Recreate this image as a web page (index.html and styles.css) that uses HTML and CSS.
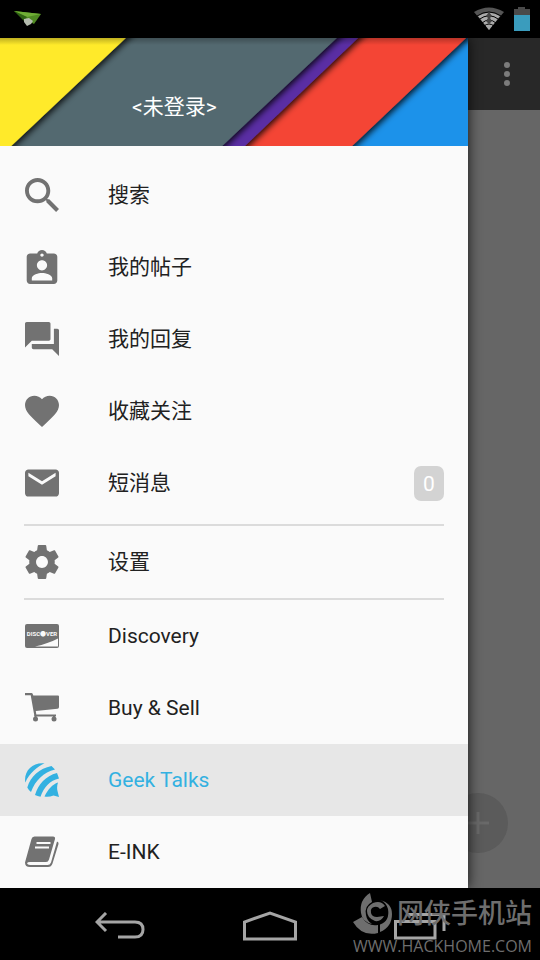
FILE: index.html
```html
<!DOCTYPE html>
<html lang="zh-CN">
<head>
<meta charset="utf-8">
<meta name="viewport" content="width=device-width, initial-scale=1">
<title>Geek Talks</title>
<link rel="stylesheet" href="styles.css">
</head>
<body>
<header class="status">
  <svg class="status-plane" width="28" height="16" viewBox="0 0 28 16" aria-hidden="true">
    <path d="M0 0L27 3L20 13L13 9Z" fill="#4f8a22"/>
    <path d="M0 0L27 3L13 6Z" fill="#6fae35"/>
    <path d="M0 0L13 6L10 10Z" fill="#2f6213"/>
    <path d="M10 8l5-1 4 3-2 3-4 2-3-4z" fill="#b4bcae"/>
  </svg>
  <div class="status-icons">
    <svg width="30" height="24" viewBox="0 0 30 24" aria-hidden="true">
      <path d="M0 5Q15-4 30 5L15 23Z" fill="#555"/>
      <path d="M4 9Q15 2 26 9L15 23Z" fill="#aaa"/>
      <g fill="none" stroke="#000" stroke-width="1"><path d="M3 9Q15 1 27 9"/><path d="M5 12.500Q15 5 25 12.500"/><path d="M8 16Q15 10 22 16"/><path d="M10 19Q15 15 20 19"/></g>
      <path d="M15 5l3 4-2 2 2 3-3 3-3-3 2-3-2-2z" fill="#444"/>
    </svg>
    <svg width="16" height="24" viewBox="0 0 16 24" aria-hidden="true">
      <path d="M4 0h7v2h5v7H0V2h4z" fill="#4a4a4a"/>
      <path d="M0 8h16v16H0z" fill="#3a9cbd"/>
    </svg>
  </div>
</header>

<main class="screen">
  <div class="toolbar">
    <button class="more" type="button" aria-label="更多">
      <svg width="6" height="24" viewBox="0 0 6 24"><circle cx="3" cy="3" r="3"/><circle cx="3" cy="12" r="3"/><circle cx="3" cy="21" r="3"/></svg>
    </button>
  </div>
  <button class="fab" type="button" aria-label="发帖">
    <svg width="22" height="22" viewBox="0 0 22 22"><path d="M11 0v22M0 11h22"/></svg>
  </button>

  <aside class="drawer">
    <div class="account">
      <svg class="account-art" viewBox="0 0 468 108" preserveAspectRatio="none" aria-hidden="true">
        <defs>
          <filter id="edge" x="-10%" y="-20%" width="120%" height="140%"><feDropShadow dx="2" dy="2" stdDeviation="3" flood-color="#000" flood-opacity=".85"/></filter>
          <linearGradient id="top" x1="0" y1="0" x2="0" y2="1"><stop offset="0" stop-opacity=".25"/><stop offset="1" stop-opacity="0"/></linearGradient>
        </defs>
        <path d="M0 0h468v108H0z" fill="#1c92ea"/>
        <path d="M-20-20H487L331 128H-20z" fill="#f44434" filter="url(#edge)"/>
        <path d="M-20-20H379L224 128H-20z" fill="#5a2ea4" filter="url(#edge)"/>
        <path d="M-20-20H358L201 128H-20z" fill="#52696f" filter="url(#edge)"/>
        <path d="M-20-20H147L-10 128H-20z" fill="#ffea2a" filter="url(#edge)"/>
        <path d="M0 0h468v7H0z" fill="url(#top)"/>
      </svg>
      <a class="account-name" href="#login">&lt;未登录&gt;</a>
    </div>
    <nav class="menu">
      <a class="item" href="#search">
        <svg class="icon" viewBox="3 3 17.5 17.5"><path d="M15.5 14h-.79l-.28-.27C15.41 12.59 16 11.11 16 9.5 16 5.91 13.09 3 9.5 3S3 5.91 3 9.5 5.91 16 9.5 16c1.61 0 3.09-.59 4.23-1.57l.27.28v.79l5 4.99L20.49 19l-4.99-5zm-6 0C7.01 14 5 11.99 5 9.5S7.01 5 9.5 5 14 7.01 14 9.5 11.99 14 9.5 14z"/></svg>
        <span class="label">搜索</span>
      </a>
      <a class="item" href="#posts">
        <svg class="icon" viewBox="2 1 20 20"><path d="M19 3h-4.18C14.4 1.84 13.3 1 12 1c-1.3 0-2.4.84-2.82 2H5c-1.1 0-2 .9-2 2v14c0 1.1.9 2 2 2h14c1.1 0 2-.9 2-2V5c0-1.1-.9-2-2-2zm-7 0c.55 0 1 .45 1 1s-.45 1-1 1-1-.45-1-1 .45-1 1-1zm0 4c1.66 0 3 1.34 3 3s-1.34 3-3 3-3-1.34-3-3 1.34-3 3-3zm6 12H6v-1.4c0-2 4-3.1 6-3.1s6 1.1 6 3.1V19z"/></svg>
        <span class="label">我的帖子</span>
      </a>
      <a class="item" href="#replies">
        <svg class="icon" viewBox="2 2 20 20"><path d="M21 6h-2v9H6v2c0 .55.45 1 1 1h11l4 4V7c0-.55-.45-1-1-1zm-4 6V3c0-.55-.45-1-1-1H3c-.55 0-1 .45-1 1v14l4-4h10c.55 0 1-.45 1-1z"/></svg>
        <span class="label">我的回复</span>
      </a>
      <a class="item" href="#favorites">
        <svg class="icon" viewBox="2 2 20 20"><path d="M12 21.35l-1.45-1.32C5.4 15.36 2 12.28 2 8.5 2 5.42 4.42 3 7.5 3c1.74 0 3.41.81 4.5 2.09C13.09 3.81 14.76 3 16.5 3 19.58 3 22 5.42 22 8.5c0 3.78-3.4 6.86-8.55 11.54L12 21.35z"/></svg>
        <span class="label">收藏关注</span>
      </a>
      <a class="item" href="#messages">
        <svg class="icon" viewBox="2 2 20 20"><path d="M20 4H4c-1.1 0-1.99.9-1.99 2L2 18c0 1.1.9 2 2 2h16c1.1 0 2-.9 2-2V6c0-1.1-.9-2-2-2zm0 4l-8 5-8-5V6l8 5 8-5v2z"/></svg>
        <span class="label">短消息</span>
        <span class="count">0</span>
      </a>
      <hr class="rule rule-spaced">
      <a class="item" href="#settings">
        <svg class="icon" viewBox="2 2 20 20"><path d="M19.43 12.98c.04-.32.07-.64.07-.98s-.03-.66-.07-.98l2.11-1.65c.19-.15.24-.42.12-.64l-2-3.46c-.12-.22-.39-.3-.61-.22l-2.49 1c-.52-.4-1.08-.73-1.69-.98l-.38-2.65C14.46 2.18 14.25 2 14 2h-4c-.25 0-.46.18-.49.42l-.38 2.65c-.61.25-1.17.59-1.69.98l-2.49-1c-.23-.09-.49 0-.61.22l-2 3.46c-.13.22-.07.49.12.64l2.11 1.65c-.04.32-.07.65-.07.98s.03.66.07.98l-2.11 1.65c-.19.15-.24.42-.12.64l2 3.46c.12.22.39.3.61.22l2.49-1c.52.4 1.08.73 1.69.98l.38 2.65c.03.24.24.42.49.42h4c.25 0 .46-.18.49-.42l.38-2.65c.61-.25 1.17-.59 1.69-.98l2.49 1c.23.09.49 0 .61-.22l2-3.46c.12-.22.07-.49-.12-.64l-2.11-1.65zM12 15.5c-1.93 0-3.5-1.57-3.5-3.5s1.57-3.5 3.5-3.5 3.5 1.57 3.5 3.5-1.57 3.5-3.5 3.5z"/></svg>
        <span class="label">设置</span>
      </a>
      <hr class="rule">
      <a class="item" href="#discovery">
        <svg class="icon" viewBox="0 0 34 34">
          <rect y="5" width="34" height="24" rx="2"/>
          <path d="M33 19.500v8H10C19 25.500 26 23 33 19.500z" fill="#fafafa"/>
          <text class="card-text" x="17" y="17" text-anchor="middle">DISC●VER</text>
        </svg>
        <span class="label">Discovery</span>
      </a>
      <a class="item" href="#buy-sell">
        <svg class="icon" viewBox="0 0 34 34">
          <path d="M0 2h6.500q1 0 1.200 1L8.300 4.500H33q1 0 1 1V16q0 1.500-1.500 1.800L10.800 20l.5 3.500H31V25.500H10.500q-1.200 0-1.200-1L5.700 4.200H0z"/>
          <circle cx="10.500" cy="28" r="2.500"/><circle cx="29" cy="28" r="2.500"/>
          <path d="M9.500 24h2v4h-2zM28 24h2v4h-2z"/>
        </svg>
        <span class="label">Buy &amp; Sell</span>
      </a>
      <a class="item item-active" href="#geek-talks" aria-current="page">
        <svg class="icon" viewBox="0 0 34 34">
          <path d="M.3 19.500C-1.500 8 7.500-1 19.500.3C12 4 4.500 10 .3 19.500z"/>
          <path d="M2.300 24.500C5.500 13.500 14.500 5.500 26.500 3L30 6.500C18.500 9.500 10.500 17 6 29Q3.500 27 2.300 24.500z"/>
          <path d="M10 32C13.500 21 20.500 13 32 10L34 15.500C25 17.500 19 24 15.500 33.800Q12.500 33.300 10 32z"/>
          <path d="M19.500 33.500C23 26 27.500 21.500 33 19.500Q31.500 24 32.500 28L34 34L28.500 32.500Q24 34.200 19.500 33.500z"/>
        </svg>
        <span class="label">Geek Talks</span>
      </a>
      <a class="item" href="#e-ink">
        <svg class="icon" viewBox="0 0 34 34">
          <path d="M9.500 1.500H28q2.500 0 2 2.500L24 24.500Q23.300 27 21 27H5Q2.500 27 2 28.200 2.500 30 5 30H22.500Q25 30 26 27.500L32 6.500Q34 7 33.500 9L27.500 28.500Q26.300 32 23 32H5Q0 32 0 27.500L6.500 4Q7 1.500 9.500 1.500z"/>
          <path d="M11.500 8H25.500M10 12.500H24" stroke="#fafafa" stroke-width="2"/>
        </svg>
        <span class="label">E-INK</span>
      </a>
    </nav>
  </aside>
</main>

<footer class="navbar">
  <button class="key" type="button" aria-label="返回">
    <svg width="50" height="28" viewBox="0 0 50 28"><path d="M11 1L2 10L11 19M2 10H40Q48 10 48 17.500T40 25H23"/></svg>
  </button>
  <button class="key" type="button" aria-label="主屏幕">
    <svg width="54" height="30" viewBox="0 0 54 30"><path d="M1.500 28V11L27 2L52.500 11V28Z"/></svg>
  </button>
  <button class="key" type="button" aria-label="最近任务">
    <svg width="52" height="28" viewBox="0 0 52 28"><path d="M1.500 9.500H41V26H1.500ZM13 2.500H50V19"/></svg>
  </button>
  <div class="watermark">
    <svg width="40" height="42" viewBox="0 0 40 42" aria-hidden="true">
      <path d="M17 0L19 9Q11 13 13 22Q14 28 19 31Q9 29 8 20Q6 7 17 0z"/>
      <path d="M0 29L9 24Q15 34 25 32V40Q9 44 0 29z"/>
      <path d="M27 31.500Q37 28 35 16Q33 9 27 7Q39 10 39 21Q39 34 27 39z"/>
      <path d="M20 10Q28 7 32 13L27 16Q24 12 19 15Q17 17 18 20Q19 24 24 24L31 23Q28 29 22 28Q14 25 14 18Q14 13 20 10z"/>
    </svg>
    <span class="watermark-name">网侠手机站</span>
    <span class="watermark-url">WWW.HACKHOME.COM</span>
  </div>
</footer>
</body>
</html>
```
FILE: styles.css
```css
* {
  box-sizing: border-box;
}

body {
  margin: 0;
  min-height: 100vh;
  display: flex;
  flex-direction: column;
  background: #000;
  color: #212121;
  font-family: Roboto, "Noto Sans CJK SC", sans-serif;
  font-size: 21px;
  line-height: 28px;
}

button {
  border: 0;
  padding: 0;
  background: none;
  display: flex;
  align-items: center;
  justify-content: center;
}

a {
  color: inherit;
  text-decoration: none;
}

svg {
  display: block;
}

/* Status bar */
.status {
  height: 38px;
  padding: 0 10px 0 14px;
  display: flex;
  align-items: center;
  justify-content: space-between;
}

.status-icons {
  display: flex;
  gap: 10px;
}

/* Page under the drawer */
.screen {
  position: relative;
  flex: 1;
  background: #666;
}

.toolbar {
  position: absolute;
  inset: 0 0 auto;
  height: 72px;
  padding-right: 18px;
  display: flex;
  justify-content: flex-end;
  background: #282828;
}

.more {
  width: 30px;
  fill: #7c7c7c;
}

.fab {
  position: absolute;
  right: 32px;
  bottom: 35px;
  width: 60px;
  height: 60px;
  border-radius: 50%;
  background: #5b5b5b;
  stroke: #696969;
  stroke-width: 3;
}

/* Drawer */
.drawer {
  position: relative;
  min-height: 100%;
  margin-right: 72px;
  background: #fafafa;
  box-shadow: 0 0 12px rgba(0, 0, 0, 0.8);
  clip-path: inset(0 -16px 0 0);
}

.account {
  position: relative;
  height: 108px;
  padding: 0 132px 25px;
  display: flex;
  align-items: flex-end;
  overflow: hidden;
}

.account-art {
  position: absolute;
  inset: 0;
  width: 100%;
  height: 100%;
}

.account-name {
  position: relative;
  color: #fff;
}

.menu {
  padding-top: 13px;
}

.item {
  height: 72px;
  padding: 0 24px 0 25px;
  display: flex;
  align-items: center;
}

.item-active {
  background: #e7e7e7;
  color: #33b1e1;
}

.icon {
  width: 34px;
  height: 34px;
  margin-right: 49px;
  fill: #727272;
}

.item-active .icon {
  fill: #33b1e1;
}

.card-text {
  fill: #fafafa;
  font-size: 6px;
  font-weight: 700;
}

.label {
  flex: 1;
}

.count {
  width: 30px;
  height: 35px;
  border-radius: 7px;
  background: #d3d3d3;
  color: #fff;
  line-height: 36px;
  text-align: center;
}

.rule {
  height: 2px;
  margin: 0 24px;
  border: 0;
  background: #dbdbdb;
}

.rule-spaced {
  margin-top: 5px;
}

/* Navigation keys */
.navbar {
  position: relative;
  height: 72px;
  padding: 4px 45px 0;
  display: flex;
}

.key {
  flex: 1;
  fill: none;
  stroke: #a5a5a5;
  stroke-width: 3;
}

.watermark {
  position: absolute;
  right: 8px;
  bottom: 3px;
  display: grid;
  grid-template-columns: 1fr auto;
  align-items: center;
  color: #6e6e6e;
  fill: #6e6e6e;
}

.watermark-name {
  font-size: 27px;
  font-weight: 500;
  line-height: 40px;
}

.watermark-url {
  grid-column: 1 / -1;
  font-family: "Open Sans", sans-serif;
  font-size: 16px;
  font-weight: 500;
  line-height: 22px;
}
```
